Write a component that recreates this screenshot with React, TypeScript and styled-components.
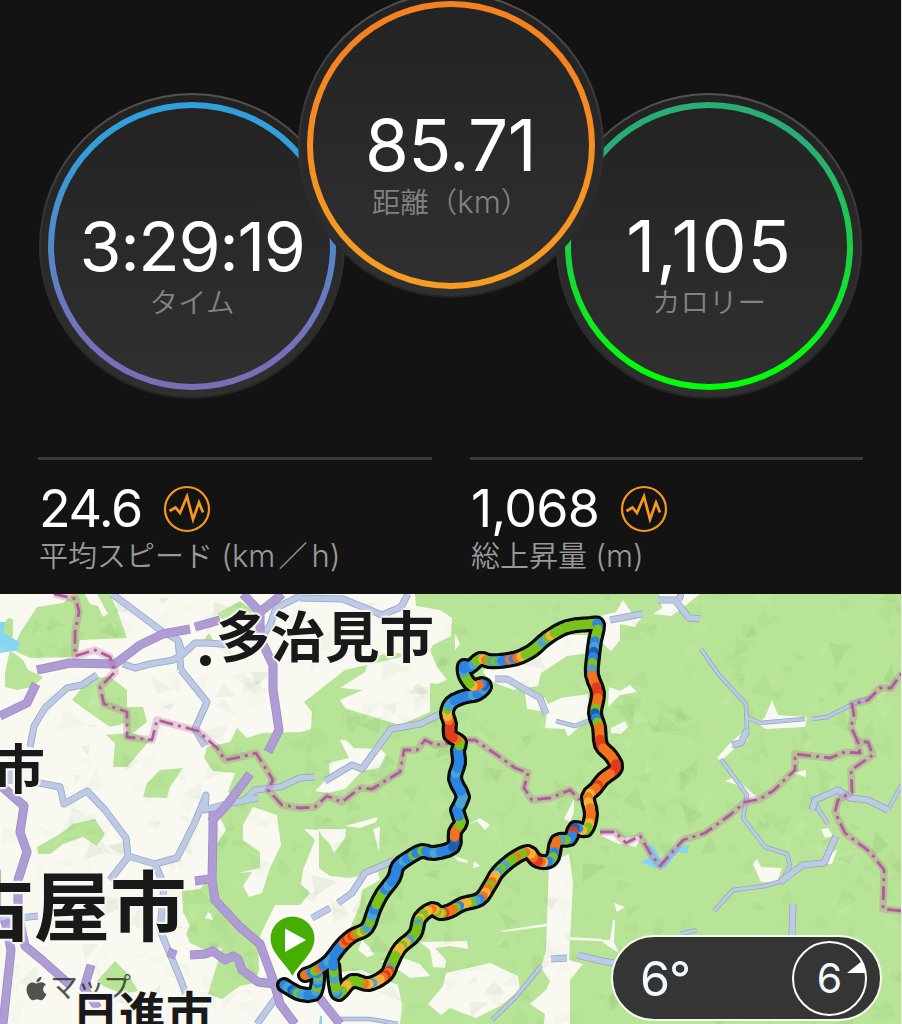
import React from "react";
import styled, { createGlobalStyle } from "styled-components";
import { FaApple } from "react-icons/fa";

const GlobalStyle = createGlobalStyle`
  *,
  *::before {
    box-sizing: border-box;
  }

  body {
    margin: 0;
    background: #e9e9e9;
    font-family: Inter, "Noto Sans CJK JP", sans-serif;
    overflow: hidden;
  }
`;

const Screen = styled.main`
  display: flex;
  flex-direction: column;
  width: 901px;
  height: 1024px;
  overflow: hidden;
  background: #131313;
`;

const Dials = styled.section`
  display: flex;
  flex: none;
  height: 457px;
  padding: 93px 38px 0 39px;
`;

type DialProps = {
  $from: string;
  $to: string;
  $raised?: boolean;
};

const Dial = styled.div<DialProps>`
  position: relative;
  z-index: ${(props) => (props.$raised ? 1 : 0)};
  flex: none;
  width: 306px;
  height: 306px;
  margin-top: ${(props) => (props.$raised ? "-101.5px" : "0")};
  padding: 9px;
  border: 2px solid transparent;
  border-radius: 50%;
  background:
    linear-gradient(#222, #303030) padding-box,
    linear-gradient(#555253, #333 45%, #232323) border-box;

  & + & {
    margin-left: -47.5px;
  }

  &::before {
    content: "";
    display: block;
    width: 288px;
    height: 288px;
    margin: -2px;
    border: 6px solid transparent;
    border-radius: 50%;
    background:
      linear-gradient(#232323, #303030) padding-box,
      linear-gradient(${(props) => `${props.$from} 15%, ${props.$to} 92%`})
        border-box;
  }
`;

const DialText = styled.div`
  position: absolute;
  inset: 0;
  display: flex;
  flex-direction: column;
  align-items: center;
  padding-top: 113px;
`;

type DialValueProps = {
  $size: number;
  $spacing: number;
};

const DialValue = styled.div<DialValueProps>`
  height: 78px;
  color: #fff;
  font-size: ${(props) => props.$size}px;
  line-height: 76px;
  letter-spacing: ${(props) => props.$spacing}px;
  white-space: nowrap;
`;

const DialLabel = styled.div`
  margin-top: 1px;
  color: #828282;
  font-size: 28.5px;
  font-weight: 350;
  line-height: 32px;
  white-space: nowrap;
`;

const Unit = styled.span`
  font-size: 31px;
`;

const Slash = styled.span`
  margin: 0 4px 0 3px;
`;

const Stats = styled.section`
  display: grid;
  grid-template-columns: 394px 393px;
  column-gap: 38px;
  flex: none;
  height: 137px;
  padding-left: 38px;
`;

const Stat = styled.div`
  padding: 23px 0 0 1px;
  border-top: 3px solid #3b3b3b;
`;

const StatTop = styled.div`
  display: flex;
  align-items: center;
  gap: 21px;
  height: 52px;
`;

const StatValue = styled.span<{ $spacing: number }>`
  color: #fff;
  font-size: 52px;
  line-height: 52px;
  letter-spacing: ${(props) => props.$spacing}px;
`;

const StatLabel = styled.div`
  margin-top: 3px;
  color: #999;
  font-size: 29px;
  font-weight: 350;
  line-height: 36px;
  white-space: nowrap;
`;

const MapView = styled.section`
  position: relative;
  flex: 1;
  overflow: hidden;
`;

const MapCanvas = styled.svg`
  display: block;
  width: 901px;
  height: 430px;
`;

type CityProps = {
  $x: number;
  $y: number;
  $size: number;
};

const City = styled.div<CityProps>`
  position: absolute;
  left: ${(props) => props.$x}px;
  top: ${(props) => props.$y}px;
  color: #191919;
  font-family: "Noto Sans CJK JP", sans-serif;
  font-size: ${(props) => props.$size}px;
  font-weight: 700;
  line-height: 1;
  white-space: nowrap;
  text-shadow:
    2px 0 1px #f8f8f2,
    -2px 0 1px #f8f8f2,
    0 2px 1px #f8f8f2,
    0 -2px 1px #f8f8f2,
    0 0 4px #f8f8f2;
`;

const Attribution = styled.div`
  position: absolute;
  left: 23px;
  top: 378px;
  display: flex;
  align-items: center;
  color: rgba(40, 40, 40, 0.8);
  font-size: 28px;
  line-height: 32px;
  letter-spacing: -1.5px;
`;

const Weather = styled.div`
  position: absolute;
  left: 611px;
  top: 341px;
  display: flex;
  align-items: center;
  justify-content: space-between;
  width: 271px;
  height: 86px;
  padding: 0 13px 0 27px;
  border: 2px solid #f4faee;
  border-radius: 43px;
  background: #353535;
  color: #eefaff;
`;

const Temperature = styled.span`
  font-size: 48.5px;
  letter-spacing: -1px;
`;

const Wind = styled.div`
  position: relative;
  display: flex;
  align-items: center;
  justify-content: center;
  width: 75px;
  height: 75px;
  border: 2px solid #fff;
  border-radius: 50%;
  font-size: 41px;
`;

const WindArrow = styled.svg`
  position: absolute;
  right: -1px;
  top: 18px;
  width: 19px;
  height: 13px;
`;

const PulseIcon: React.FC = () => (
  <svg width="48" height="48" viewBox="0 0 48 48" fill="none" stroke="#f7981d">
    <circle cx="24" cy="24" r="22" strokeWidth="2.200" />
    <path
      d="M6.500 26 12.500 22.500 17 28 24 11.500 30 34.500 36 17.500 40 27.500"
      strokeWidth="2.700"
    />
  </svg>
);

const MEADOW = "#b7e496";
const GROUND = "#f9f9f2";

const woods = [
  "415,594 416,606 440,610 452,618 451,636 433,645 430,650 437,667 447,680 437,684 430,683 430,712 400,725 357,712 345,708 340,700 363,690 340,688 365,672 370,658 392,652 410,655 345,670 304,702 312,712 311,729 301,732 262,733 247,738 237,728 230,742 207,747 204,758 213,771 235,773 228,792 243,800 217,811 226,830 215,846 216,870 200,889 182,891 183,912 190,926 186,934 190,943 205,950 222,948 208,994 222,999 240,986 255,983 259,970 258,940 275,905 300,905 310,893 301,884 303,870 315,840 304,829 319,830 319,868 330,876 350,878 378,872 380,880 362,890 360,905 345,940 336,962 342,972 362,970 380,978 398,985 402,1005 400,1024 902,1024 902,594",
  "20,633 37,607 63,603 73,594 110,594 117,610 127,638 80,640 77,657 30,658 13,650",
  "5,673 10,650 23,660 28,670 43,677 33,687 17,690 5,687",
  "1,628 8,618 13,619 13,637 4,638",
  "72,700 90,678 110,677 127,690 127,707 143,707 147,722 133,733 150,740 127,767 113,767 115,743 106,735 127,733 125,723 110,727 90,713",
  "143,797 147,783 160,770 183,768 170,787 167,798",
  "37,847 60,834 73,824 95,819 105,834 97,846 83,837 63,844 50,854 38,854",
  "97,981 115,961 128,974 138,991 123,994 105,987",
  "217,614 240,601 256,612 245,616 222,619",
  "204,640 209,633 213,640 207,643",
];

const clearings = [
  "85,594 97,594 108,614 103,617 98,606 90,604",
  "318,829 346,829 345,838 334,853 330,844 322,836",
  "345,826 378,817 376,822 360,828",
  "373,829 380,827 379,852",
  "243,840 243,825 253,807 277,815 281,845 270,868 262,893 249,897 243,886 252,872 238,873 260,868 260,852",
  "208,912 211,914 213,920 205,918",
  "340,740 346,740 354,748 380,749 386,754 379,768 362,771 345,789 328,793 315,791 330,776 329,763 349,758",
  "455,633 460,644 455,650",
  "490,661 535,652 567,635 587,635 589,653 567,656 541,673 538,686 513,690 490,681 483,672",
  "525,692 545,698 548,704 561,698 588,694 590,718 580,726 568,737 565,729 545,728 547,712 527,709",
  "600,616 616,612 623,600 631,612 642,617 635,627 620,624 620,640 611,651 602,643",
  "609,687 620,691 630,685 637,692 620,695 608,707",
  "611,728 625,721 628,727 621,734 611,733",
  "659,594 700,594 681,609 671,616 653,614 662,608",
  "689,594 699,594 684,603",
  "564,819 574,799 574,812 570,822",
  "549,862 569,854 573,882 569,960 583,964 570,980 570,1024 544,1024 545,1014 530,1004 546,990 550,981 541,968 546,950",
  "428,1004 443,986 446,973 490,963 518,976 520,990 500,1006 476,1018 450,1008 441,1015",
  "420,942 467,941 468,949 450,946 435,948 446,960 445,968 433,967 430,950",
  "467,825 480,818 490,825 485,830 477,821",
  "454,856 467,860 468,863 458,861",
  "474,861 480,866 473,868",
  "750,719 758,724 765,717 772,700 778,715 807,717 805,727 766,729",
  "717,758 730,743 743,732 748,740 735,748 721,761",
  "725,781 732,778 742,784 758,798 752,802 737,785",
  "793,773 806,770 806,777",
  "753,864 757,859 761,867 782,868 777,882 761,882",
  "821,829 828,828 833,836 825,838",
  "832,852 837,850 832,864 826,864",
  "600,835 612,831 624,838 641,836 636,847 616,843",
  "614,903 625,907 617,912",
  "613,920 615,920 614,942 619,953 608,946 600,940 610,940",
  "501,931 550,923 550,926 502,932",
  "570,937 602,939 602,941 570,940",
  "812,800 816,805 813,809",
  "362,940 370,948 374,955 367,957 358,950",
  "380,961 403,958 420,964 430,976 410,978 402,972",
];

const lakes = [
  "0,622 5,622 3,633 20,642 18,650 0,653",
  "640,862 650,857 645,846 653,846 663,863 673,848 690,845 687,853 678,852 665,868 655,868",
  "320,1016 322,1016 322,1024 319,1024",
];

const blueRoads = [
  "112,594 135,611 163,632 178,640 183,654 173,660 150,664 135,668 123,664",
  "178,640 181,670",
  "183,654 195,643 207,643 235,645",
  "181,670 207,702 195,729 205,746",
  "97,675 82,685 67,688 45,708 34,726 30,747",
  "260,640 270,625 276,608 300,596",
  "300,598 343,599 365,608 382,615 401,607 408,594",
  "34,782 60,787 64,804 87,791 105,810 126,838 128,856 155,864 177,858 195,822",
  "9,768 9,784",
  "128,857 110,880",
  "155,864 164,885 160,930 180,978 186,994",
  "195,822 206,795 205,810 226,804 258,798",
  "245,800 255,790 280,787 300,778 315,777",
  "325,781 352,765 362,769 391,729 420,724 440,714",
  "495,679 507,679 540,698 546,714",
  "395,860 365,873 352,893 338,903",
  "330,908 312,918",
  "610,620 642,614",
  "658,600 675,600 689,618 700,619",
  "679,600 681,594",
  "747,730 741,743 732,745",
  "551,959 567,958",
  "577,955 602,961 614,963",
  "278,995 257,1024",
  "780,882 803,865 824,863 836,836",
  "793,904 792,936",
  "812,810 815,800 838,790 850,798 868,800 888,810",
  "0,920 38,916",
];

const lanes = [
  "556,721 575,726 590,720",
  "701,649 719,675 746,704 747,730",
  "721,759 747,795 743,818 756,835 765,847 787,854 790,866 782,881 765,886 733,890 714,911",
  "748,718 760,723 805,719",
  "812,719 827,717 857,702 870,698",
  "812,797 820,812 828,824",
  "888,810 902,784",
  "680,934 697,930",
  "541,966 515,998 492,1020",
  "338,1019 370,1019 398,1024",
];

const purpleRoads = [
  "243,594 260,612 275,600 282,594",
  "260,610 260,638 273,665 273,690 279,730 268,752",
  "37,670 70,663 115,664 140,645 163,634 190,629",
  "195,627 220,620",
  "0,716 27,703 36,684",
  "0,785 24,806 20,832 27,852 18,880 18,915 25,946 42,960 70,985",
  "5,920 11,950 3,1024",
  "91,965 84,988 98,1008",
  "250,774 226,806 211,822",
  "213,811 213,830 212,880 215,900 240,927 260,944 274,982 280,1004 295,1024",
  "195,881 210,879",
  "190,955 205,954 213,951 225,960 233,956 238,959 242,970 258,982 274,984",
  "168,952 176,955",
  "318,996 340,1024",
];

const borders = [
  "54,594 76,599 79,612 75,632 75,656 95,650 110,657 115,672 100,687 104,704 127,712 127,737 152,740 157,720 198,731 217,748 225,760 240,757 256,753 273,780 268,790 282,805 300,808 315,807 327,796 342,802 360,788 372,789 400,772 404,750 417,750 425,740 435,745 450,743",
  "465,740 475,740 497,755 515,768 528,773 524,788 532,800 550,798 570,790 580,800",
  "600,832 615,832 626,843 640,836 650,853 660,866 683,840 705,833 730,815 745,802 760,799 773,791 795,770 795,754 830,758 845,752 860,753 858,742 868,742 873,755 851,770 852,792 838,800 835,812 845,833 870,852 884,870 883,909 902,911",
  "858,742 851,727 854,715 852,704 868,700 880,688 891,688 902,673",
];

const routeColors: Record<string, string> = {
  g: "#7cc21e",
  b: "#2d85e2",
  c: "#4aa3d0",
  d: "#1c5fb3",
  o: "#f2731e",
  y: "#f3b23a",
  r: "#e03c1b",
};

// x, y and the speeds driven between this point and the next one
const route: Array<[number, number, string]> = [
  [284, 985, "bc"],
  [292, 990, "dbg"],
  [301, 994, "cb"],
  [314, 994, "bcgb"],
  [318, 980, "cgb"],
  [316, 972, "bg"],
  [305, 975, "oo"],
  [311, 973, "bgo"],
  [323, 966, "bbc"],
  [331, 959, "cbb"],
  [341, 946, "boro"],
  [352, 936, "rogyg"],
  [367, 928, "cgc"],
  [374, 910, "bgg"],
  [382, 894, "gbcb"],
  [394, 878, "bbb"],
  [398, 866, "bbcb"],
  [410, 857, "bgbb"],
  [422, 851, "gbb"],
  [434, 853, "cbb"],
  [453, 847, "ddo"],
  [455, 832, "oog"],
  [461, 822, "gb"],
  [457, 810, "bc"],
  [463, 797, "cbb"],
  [455, 779, "bcb"],
  [459, 763, "bbb"],
  [458, 750, "bg"],
  [460, 742, "gor"],
  [450, 735, "rr"],
  [450, 724, "roy"],
  [447, 713, "ygc"],
  [451, 703, "cbb"],
  [463, 697, "bbc"],
  [477, 694, "bbc"],
  [485, 687, "bd"],
  [482, 684, "boo"],
  [473, 686, "ygg"],
  [465, 676, "gcb"],
  [464, 666, "bb"],
  [470, 667, "bcg"],
  [480, 659, "gyo"],
  [489, 661, "gcg"],
  [499, 661, "cbbob"],
  [517, 658, "oygg"],
  [533, 650, "ggc"],
  [547, 638, "gyggg"],
  [567, 627, "ggg"],
  [591, 624, "ggb"],
  [598, 625, "bgg"],
  [595, 641, "bcd"],
  [593, 657, "bgc"],
  [592, 675, "oor"],
  [598, 693, "roog"],
  [595, 713, "dbg"],
  [599, 727, "oor"],
  [601, 745, "rooo"],
  [611, 756, "oor"],
  [616, 768, "rroo"],
  [603, 779, "oor"],
  [596, 788, "ooy"],
  [588, 797, "oyo"],
  [591, 814, "ooyg"],
  [586, 830, "gyb"],
  [575, 828, "drb"],
  [570, 839, "bgc"],
  [557, 841, "oob"],
  [553, 857, "ggcb"],
  [546, 862, "byor"],
  [536, 860, "roy"],
  [528, 852, "yoggo"],
  [513, 859, "ggcg"],
  [498, 872, "cyyo"],
  [490, 885, "goyo"],
  [480, 899, "bcgy"],
  [463, 904, "ybgo"],
  [450, 911, "oorg"],
  [440, 913, "ygy"],
  [432, 909, "oyg"],
  [420, 918, "ygcgg"],
  [415, 934, "ggcyg"],
  [400, 948, "yygg"],
  [392, 963, "ggcro"],
  [386, 975, "royyc"],
  [369, 984, "yogg"],
  [352, 981, "gyg"],
  [339, 994, "gbcg"],
  [335, 984, "gcgb"],
  [333, 962, "b"],
];

// Catmull-Rom between p1 and p2
const spline = (p0: number, p1: number, p2: number, p3: number, t: number) =>
  0.5 *
  (2 * p1 +
    (p2 - p0) * t +
    (2 * p0 - 5 * p1 + 4 * p2 - p3) * t * t +
    (3 * p1 - p0 - 3 * p2 + p3) * t * t * t);

const pointAt = (index: number, t: number) => {
  const last = route.length - 1;
  const p0 = route[Math.max(0, index - 1)];
  const p1 = route[index];
  const p2 = route[Math.min(last, index + 1)];
  const p3 = route[Math.min(last, index + 2)];
  return {
    x: spline(p0[0], p1[0], p2[0], p3[0], t),
    y: spline(p0[1], p1[1], p2[1], p3[1], t),
  };
};

const routePieces = route.slice(0, -1).flatMap(([, , speeds], index) =>
  speeds.split("").map((speed, step) => {
    const start = pointAt(index, step / speeds.length);
    const end = pointAt(index, (step + 1) / speeds.length);
    return {
      x1: start.x,
      y1: start.y,
      x2: end.x,
      y2: end.y,
      color: routeColors[speed],
    };
  })
);

const routeLine = routePieces.map(({ x1, y1 }) => `${x1},${y1}`).join(" ");

// Relief shading: small folded facets, stable between renders
const makeFacets = () => {
  let seed = 41;
  const random = () => {
    seed = (seed * 16807) % 2147483647;
    return seed / 2147483647;
  };
  return Array.from({ length: 1100 }, () => {
    const x = random() * 902;
    const y = 594 + random() * 430;
    const angle = random() * Math.PI * 2;
    const size = 10 + random() * 18;
    const corner = (turn: number, reach: number) =>
      `${x + Math.cos(angle + turn) * size * reach} ${
        y + Math.sin(angle + turn) * size * reach
      }`;
    return {
      d: `M${x} ${y}L${corner(0, 1)}L${corner(0.5 + random(), 0.8)}z`,
      fill: random() > 0.5 ? "#5d8a42" : "#f4ffe0",
      opacity: 0.02 + random() * random() * 0.1,
    };
  });
};

const facets = makeFacets();

type RoadsProps = {
  lines: string[];
  color: string;
  edge: string;
  width: number;
};

const Roads: React.FC<RoadsProps> = ({ lines, color, edge, width }) => (
  <g fill="none" strokeLinejoin="round">
    {lines.map((points) => (
      <polyline key={points} points={points} stroke={edge} strokeWidth={width} />
    ))}
    {lines.map((points) => (
      <polyline
        key={points}
        points={points}
        stroke={color}
        strokeWidth={width - 1.5}
      />
    ))}
  </g>
);

const RideMap: React.FC = () => (
  <MapCanvas viewBox="0 594 901 430">
    <rect y="594" width="902" height="430" fill={GROUND} />
    {woods.map((points) => (
      <polygon key={points} points={points} fill={MEADOW} />
    ))}
    {clearings.map((points) => (
      <polygon key={points} points={points} fill={GROUND} />
    ))}
    {lakes.map((points) => (
      <polygon key={points} points={points} fill="#85d5f3" />
    ))}
    {facets.map((facet, index) => (
      <path key={index} {...facet} />
    ))}
    <Roads lines={lanes} color="#bdcae3" edge="#93a4cb" width={4.5} />
    <Roads lines={blueRoads} color="#bdcae3" edge="#93a4cb" width={7} />
    <Roads lines={purpleRoads} color="#b09cd4" edge="#9a8bc4" width={9} />
    <g fill="none" strokeLinejoin="round">
      {borders.map((points) => (
        <g key={points}>
          <polyline
            points={points}
            stroke="#b9679f"
            strokeOpacity="0.3"
            strokeWidth="7.500"
          />
          <polyline
            points={points}
            stroke="#b05b9e"
            strokeWidth="2.800"
            strokeDasharray="14 5 3 5"
          />
        </g>
      ))}
    </g>
    <circle cx="205.500" cy="660.500" r="7.500" fill={GROUND} />
    <circle cx="205.500" cy="660.500" r="5.500" fill="#191919" />
    <polyline
      points={routeLine}
      fill="none"
      stroke="#0b0d0a"
      strokeWidth="16"
      strokeLinejoin="round"
      strokeLinecap="round"
    />
    <g strokeWidth="9.500" strokeLinecap="round">
      {routePieces.map(({ color, ...line }, index) => (
        <line key={index} {...line} stroke={color} />
      ))}
    </g>
    <path
      d="M292.500 981C287 968 268 955 268 938.500a24.500 24.500 0 0 1 49 0C317 955 298 968 292.500 981Z"
      fill="#fff"
    />
    <path
      d="M292.500 976C287 965 270.500 953 270.500 938.500a22 22 0 0 1 44 0C314.500 953 298 965 292.500 976Z"
      fill="#46ae00"
    />
    <path d="M285 928.500 306 940 285 952Z" fill="#fff" />
  </MapCanvas>
);

const App: React.FC = () => {
  return (
    <>
      <GlobalStyle />
      <Screen>
        <Dials>
          <Dial $from="#309fda" $to="#7d6cb6">
            <DialText>
              <DialValue $size={68} $spacing={-1.4}>
                3:29:19
              </DialValue>
              <DialLabel>タイム</DialLabel>
            </DialText>
          </Dial>
          <Dial $from="#f58220" $to="#f79c22" $raised>
            <DialText>
              <DialValue $size={71} $spacing={-0.5}>
                85.71
              </DialValue>
              <DialLabel>
                距離（<Unit>km</Unit>）
              </DialLabel>
            </DialText>
          </Dial>
          <Dial $from="#29ad73" $to="#05fc09">
            <DialText>
              <DialValue $size={71.5} $spacing={0.9}>
                1,105
              </DialValue>
              <DialLabel>カロリー</DialLabel>
            </DialText>
          </Dial>
        </Dials>
        <Stats>
          <Stat>
            <StatTop>
              <StatValue $spacing={-1.5}>24.6</StatValue>
              <PulseIcon />
            </StatTop>
            <StatLabel>
              平均スピード <Unit>(km</Unit>
              <Slash>／</Slash>
              <Unit>h)</Unit>
            </StatLabel>
          </Stat>
          <Stat>
            <StatTop>
              <StatValue $spacing={-0.8}>1,068</StatValue>
              <PulseIcon />
            </StatTop>
            <StatLabel>
              総上昇量 <Unit>(m)</Unit>
            </StatLabel>
          </Stat>
        </Stats>
        <MapView>
          <RideMap />
          <City $x={216} $y={13} $size={54.5}>
            多治見市
          </City>
          <City $x={-8} $y={146} $size={53}>
            市
          </City>
          <City $x={-43} $y={270} $size={76.5}>
            古屋市
          </City>
          <Attribution>
            <FaApple size={27} />
            マップ
          </Attribution>
          <City $x={72} $y={393} $size={47}>
            日進市
          </City>
          <Weather>
            <Temperature>6°</Temperature>
            <Wind>
              6
              <WindArrow viewBox="0 0 19 13">
                <path d="M0 12 15 0 19 12Z" fill="#fff" />
              </WindArrow>
            </Wind>
          </Weather>
        </MapView>
      </Screen>
    </>
  );
};

export default App;
